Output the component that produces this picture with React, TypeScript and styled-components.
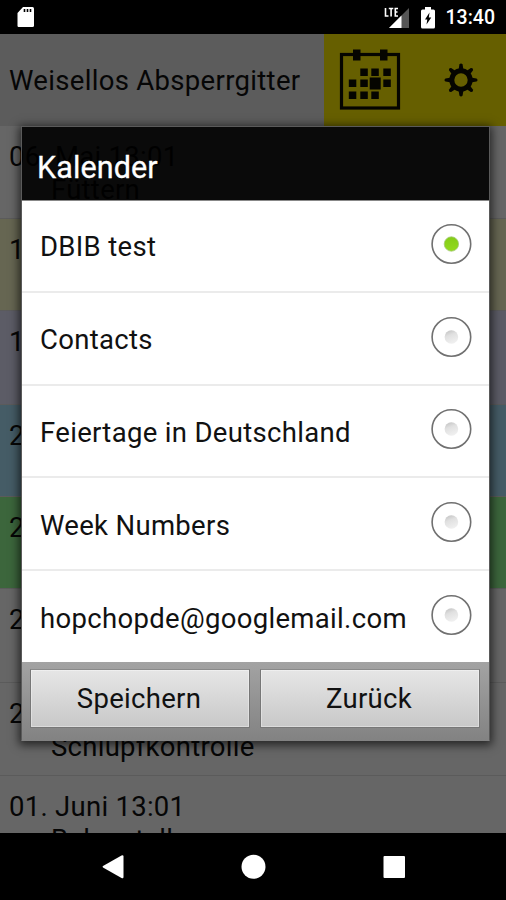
import React from "react";
import styled, { createGlobalStyle } from "styled-components";

const GlobalStyle = createGlobalStyle`
  * { box-sizing: border-box; }
  body { margin: 0; background: #000; font-family: Roboto, "Liberation Sans", sans-serif; }
  button { font-family: inherit; }
`;

const Screen = styled.div`
  position: relative;
  display: flex;
  flex-direction: column;
  width: 506px;
  height: 900px;
  overflow: hidden;
  background: #000;
`;

const StatusBar = styled.header`
  display: flex;
  align-items: center;
  justify-content: space-between;
  height: 34px;
  padding: 0 11px 0 17px;
  flex: none;
`;

const StatusIcons = styled.div`
  display: flex;
  align-items: center;
`;

const Clock = styled.span`
  margin-left: 11px;
  color: #fff;
  font-size: 19.5px;
  font-weight: 500;
  line-height: 34px;
  padding-top: 2px;
`;

const AppArea = styled.main`
  display: flex;
  flex-direction: column;
  flex: 1;
  min-height: 0;
  overflow: hidden;
  background: #666;
  color: #060606;
  font-size: 27.5px;
`;

const AppBar = styled.div`
  display: flex;
  height: 92px;
  flex: none;
  background: #5c5c5c;
`;

const AppTitle = styled.div`
  width: 324px;
  padding-left: 9px;
  line-height: 93px;
  letter-spacing: 0.32px;
  white-space: nowrap;
`;

const Actions = styled.div`
  display: flex;
  flex: 1;
  background: #665f00;
`;

const Action = styled.div`
  display: flex;
  width: 91px;
  align-items: center;
  justify-content: center;
`;

const Entry = styled.div<{ $tone: string; $size: number }>`
  flex: none;
  height: ${(p) => p.$size}px;
  padding: 14px 0 0 9px;
  overflow: hidden;
  background: ${(p) => p.$tone};
  border-bottom: 1px solid #5b5b5b;
  line-height: 33px;
  letter-spacing: 0.27px;
  white-space: nowrap;
`;

const EntryTask = styled.div`
  padding-left: 42px;
`;

const NavBar = styled.nav`
  display: flex;
  flex: none;
  height: 67px;
`;

const Dialog = styled.section`
  position: absolute;
  left: 21px;
  top: 126px;
  width: 469px;
  height: 615px;
  display: flex;
  flex-direction: column;
  border: 1px solid #5a5a5a;
  border-bottom-color: #757575;
  box-shadow: 0 2px 9px 2px rgba(0, 0, 0, 0.65);
`;

const DialogTitle = styled.h1`
  margin: 0;
  height: 73px;
  padding-left: 15px;
  background: rgba(0, 0, 0, 0.9);
  color: #fff;
  font-size: 30.5px;
  font-weight: 400;
  line-height: 81px;
  letter-spacing: 0.1px;
  -webkit-text-stroke: 0.3px #fff;
`;

const Options = styled.div`
  flex: none;
  height: 462px;
  background: #fff;
  border-top: 1px solid #888;
`;

const Option = styled.div`
  display: flex;
  align-items: center;
  justify-content: space-between;
  height: 92.8px;
  padding: 0 17px 3px 18px;
  border-bottom: 2px solid #ebebeb;
  color: #111;
  font-size: 27.5px;
  letter-spacing: 0.32px;
  white-space: nowrap;
  &:first-child { height: 91.8px; padding-bottom: 4px; }
  &:last-child { border-bottom: 0; height: 90px; padding-bottom: 2px; }
`;

const Label = styled.span`
  padding-top: 6px;
`;

const Footer = styled.footer`
  display: flex;
  flex: 1;
  gap: 10px;
  padding: 7px 9px 13px 8px;
  background: linear-gradient(#a3a3a3, #828282);
`;

const DialogButton = styled.button`
  flex: 1;
  padding: 1px 2px 0 0;
  border: 1px solid #777;
  border-top-color: #8a8a8a;
  box-shadow: inset 0 0 0 1px rgba(255, 255, 255, 0.35);
  background: linear-gradient(#e6e6e6, #c8c8c8);
  color: #111;
  font-size: 27.5px;
  letter-spacing: 0.3px;
  line-height: 56px;
`;

const SdCard = () => (
  <svg width="18" height="22" viewBox="0 0 18 22">
    <path d="M6 1h9.500Q17 1 17 2.500v17q0 1.500-1.500 1.500h-14Q.5 21 .5 19.500V7z" fill="#fff" />
    <path d="M7.500 3v3M10.500 3v3M13.500 3v3" stroke="#000" strokeWidth="1.600" />
  </svg>
);

const Signal = () => (
  <svg width="26" height="24" viewBox="0 0 26 24">
    <path d="M25 3v20H5z" fill="#555" />
    <path d="M17.500 10.500V23H5z" fill="#fff" />
    <path d="M1.500 3v8h3M4.800 3.500h4.500M7.100 3v8.500M14 3.500h-2.700v7.500h2.700M11 7h2.500" stroke="#fff" strokeWidth="1.600" fill="none" />
  </svg>
);

const Battery = () => (
  <svg width="14" height="22" viewBox="0 0 14 22">
    <path d="M4 0h6v2.500h2.500Q14 2.500 14 4v16q0 1.500-1.500 1.500h-11Q0 21.500 0 20V4Q0 2.500 1.500 2.500H4z" fill="#fff" />
    <path d="M8.500 5.500L4 12.500H6.300L5.500 17.500L10.300 10.500H7.800z" fill="#000" />
  </svg>
);

const BatterySlot = styled.span`
  display: flex;
  margin-left: 11px;
  padding-top: 1px;
`;

const days: Array<[number, number]> = [
  [21, 19.5], [32, 19.5], [44, 19.5],
  [9.5, 30.5], [21, 30.5], [44, 30.5],
  [9.5, 42.5], [21, 42.5], [32, 42.5],
];

const CalendarIcon = () => (
  <svg width="62" height="62" viewBox="0 0 62 62">
    <rect x="2.500" y="5.500" width="57" height="53.500" fill="none" stroke="#050500" strokeWidth="3.200" />
    <rect x="14" y="0.500" width="7.500" height="11" fill="#050500" />
    <rect x="41" y="0.500" width="7.500" height="11" fill="#050500" />
    {days.map(([x, y]) => (
      <rect key={`${x}-${y}`} x={x + 0.3} y={y} width="7.500" height="7.500" fill="#050500" />
    ))}
    <rect x="30.700" y="28.500" width="11" height="12" fill="#050500" />
  </svg>
);

const spokes = [0, 45, 90, 135, 180, 225, 270, 315];

const GearIcon = () => (
  <svg width="36" height="36" viewBox="-18 -18 36 36">
    <circle r="9.200" fill="none" stroke="#050500" strokeWidth="5" />
    {spokes.map((a) => (
      <path key={a} d="M-2.300-11L-1.600-15.500Q0-17.500 1.600-15.500L2.300-11z" transform={`rotate(${a})`} fill="#050500" />
    ))}
  </svg>
);

const Radio = ({ checked }: { checked: boolean }) => (
  <svg width="42" height="42" viewBox="0 0 42 42">
    <defs>
      <linearGradient id="on" x1="0" y1="0" x2="0" y2="1">
        <stop offset="0" stopColor="#84cc18" />
        <stop offset="1" stopColor="#93da1e" />
      </linearGradient>
      <linearGradient id="off" x1="0" y1="0" x2="0.400" y2="1">
        <stop offset="0" stopColor="#bdbdbd" />
        <stop offset="0.450" stopColor="#e0e0e0" />
        <stop offset="1" stopColor="#efefef" />
      </linearGradient>
    </defs>
    <circle cx="21.400" cy="21" r="19.300" fill="#fff" stroke="#707070" strokeWidth="1.600" />
    {checked ? (
      <circle cx="21.400" cy="21" r="7.200" fill="url(#on)" stroke="#a5c977" strokeWidth="0.800" />
    ) : (
      <circle cx="21.400" cy="21" r="6.800" fill="url(#off)" />
    )}
  </svg>
);

const NavIcons = () => (
  <svg width="506" height="67" viewBox="0 0 506 67" fill="#fff">
    <path d="M103 33L121.500 22.500q2-.8 2 1v20.500q0 2-2 1L103 34.500q-1-.8 0-1.500z" />
    <circle cx="253.500" cy="33.800" r="12" />
    <rect x="383.500" y="23" width="21.500" height="22" rx="1" />
  </svg>
);

const entries = [
  { date: "06. Mai 13:01", task: "Füttern", tone: "#666666", size: 93 },
  { date: "15. Mai 13:01", task: "", tone: "#666652", size: 92 },
  { date: "18. Mai 13:01", task: "", tone: "#5c5c66", size: 94 },
  { date: "21. Mai 13:01", task: "", tone: "#455c66", size: 92 },
  { date: "24. Mai 13:01", task: "", tone: "#3c663c", size: 92 },
  { date: "27. Mai 13:01", task: "", tone: "#666666", size: 94 },
  { date: "29. Mai 13:01", task: "Schlupfkontrolle", tone: "#666666", size: 93 },
  { date: "01. Juni 13:01", task: "Belegstelle", tone: "#666666", size: 93 },
];

const calendars = [
  "DBIB test",
  "Contacts",
  "Feiertage in Deutschland",
  "Week Numbers",
  "hopchopde@googlemail.com",
];

export default function App() {
  return (
    <Screen>
      <GlobalStyle />
      <StatusBar>
        <SdCard />
        <StatusIcons>
          <Signal />
          <BatterySlot><Battery /></BatterySlot>
          <Clock>13:40</Clock>
        </StatusIcons>
      </StatusBar>
      <AppArea>
        <AppBar>
          <AppTitle>Weisellos Absperrgitter</AppTitle>
          <Actions>
            <Action><CalendarIcon /></Action>
            <Action><GearIcon /></Action>
          </Actions>
        </AppBar>
        {entries.map((e) => (
          <Entry key={e.date} $tone={e.tone} $size={e.size}>
            {e.date}
            <EntryTask>{e.task}</EntryTask>
          </Entry>
        ))}
      </AppArea>
      <NavBar><NavIcons /></NavBar>
      <Dialog>
        <DialogTitle>Kalender</DialogTitle>
        <Options>
          {calendars.map((name, i) => (
            <Option key={name}>
              <Label>{name}</Label>
              <Radio checked={i === 0} />
            </Option>
          ))}
        </Options>
        <Footer>
          <DialogButton>Speichern</DialogButton>
          <DialogButton>Zurück</DialogButton>
        </Footer>
      </Dialog>
    </Screen>
  );
}
